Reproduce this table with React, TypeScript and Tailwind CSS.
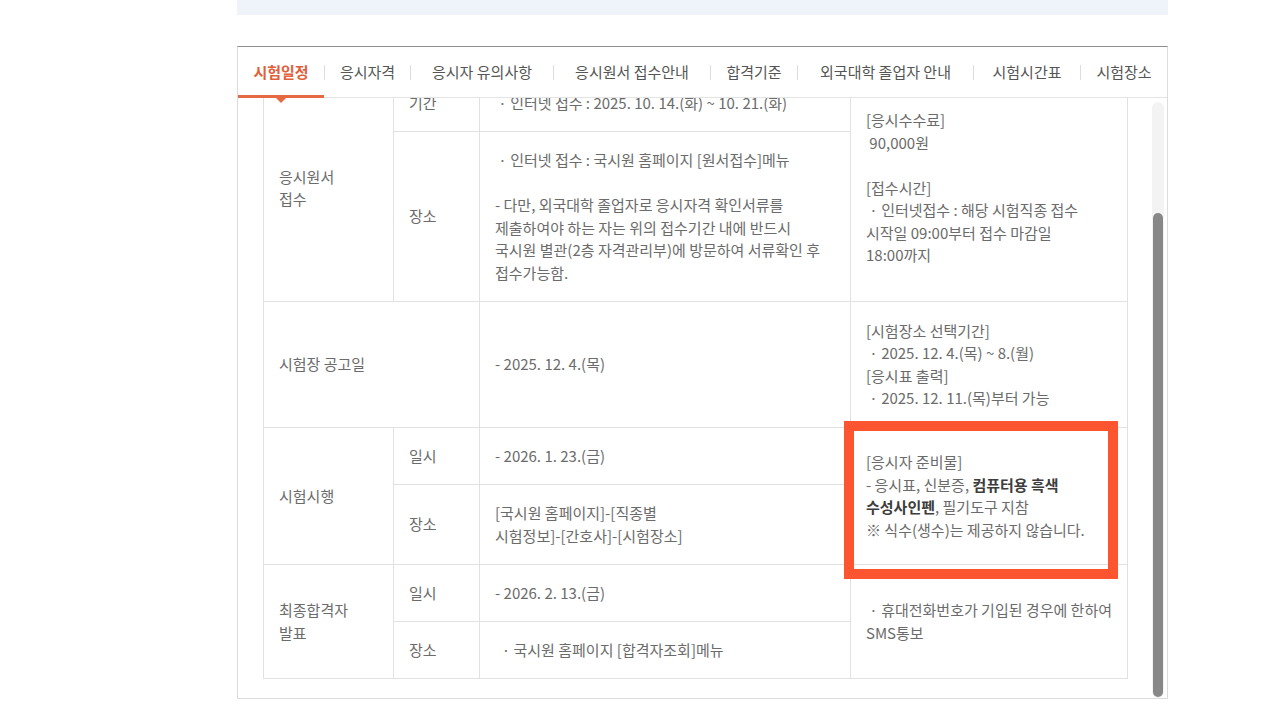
import React from 'react';

const TABS = [
  { label: '시험일정', w: 'w-[86px]' },
  { label: '응시자격', w: 'w-[85px]' },
  { label: '응시자 유의사항', w: 'w-[142px]' },
  { label: '응시원서 접수안내', w: 'w-[156px]' },
  { label: '합격기준', w: 'w-[86px]' },
  { label: '외국대학 졸업자 안내', w: 'w-[175px]' },
  { label: '시험시간표', w: 'w-[106px]' },
  { label: '시험장소', w: 'w-[86px]' },
];

const cell = 'border border-[#e1e1e1] px-[15px] py-[16px] align-middle text-left whitespace-nowrap';

const App: React.FC = () => {
  return (
    <div className="min-h-screen bg-white text-[15px] leading-[22.5px] text-[#6b6b6b]" style={{ fontFamily: '"Noto Sans CJK KR", "Noto Sans", sans-serif' }}>
      <div className="ml-[237px] w-[931px]">
        <div className="h-[15px] bg-[#eef4fa]" />

        <div className="mt-[31px] border border-[#dcdcdc] border-t-[#8e8e8e]">
          {/* tab bar */}
          <div className="flex h-[51px] items-center border-b border-[#e4e4e4]">
            {TABS.map((tab, i) => (
              <React.Fragment key={tab.label}>
                {i > 0 && <span className="h-[15px] w-px shrink-0 bg-[#dddddd]" />}
                <div
                  className={`relative flex h-full shrink-0 items-center justify-center whitespace-nowrap ${tab.w} ${
                    i === 0 ? 'font-bold text-[#e0603b]' : 'text-[#555555]'
                  }`}
                >
                  {tab.label}
                  {i === 0 && (
                    <>
                      <span className="absolute inset-x-0 -bottom-px h-[3px] bg-[#e56a43]" />
                      <span className="absolute -bottom-[6px] left-1/2 h-0 w-0 -translate-x-1/2 border-x-[5px] border-t-[5px] border-x-transparent border-t-[#e56a43]" />
                    </>
                  )}
                </div>
              </React.Fragment>
            ))}
          </div>

          {/* scroll area */}
          <div className="flex h-[600px] overflow-hidden">
            <div className="flex-1 pl-[25px] pr-[24px] pb-[20px]">
              <table className="-mt-[24px] w-full table-fixed border-collapse">
                <colgroup>
                  <col className="w-[130px]" />
                  <col className="w-[86px]" />
                  <col className="w-[371px]" />
                  <col />
                </colgroup>
                <tbody>
                  <tr className="h-[57px]">
                    <td rowSpan={2} className={cell}>
                      응시원서
                      <br />
                      접수
                    </td>
                    <td className={cell}>기간</td>
                    <td className={cell}>&nbsp;· 인터넷 접수 : 2025. 10. 14.(화) ~ 10. 21.(화)</td>
                    <td rowSpan={2} className={cell}>
                      [응시수수료]
                      <br />
                      &nbsp;90,000원
                      <br />
                      <br />
                      [접수시간]
                      <br />
                      &nbsp;· 인터넷접수 : 해당 시험직종 접수
                      <br />
                      시작일 09:00부터 접수 마감일
                      <br />
                      18:00까지
                    </td>
                  </tr>
                  <tr className="h-[170px]">
                    <td className={cell}>장소</td>
                    <td className={cell}>
                      &nbsp;· 인터넷 접수 : 국시원 홈페이지 [원서접수]메뉴
                      <br />
                      <br />
                      - 다만, 외국대학 졸업자로 응시자격 확인서류를
                      <br />
                      제출하여야 하는 자는 위의 접수기간 내에 반드시
                      <br />
                      국시원 별관(2층 자격관리부)에 방문하여 서류확인 후
                      <br />
                      접수가능함.
                    </td>
                  </tr>
                  <tr className="h-[126px]">
                    <td colSpan={2} className={cell}>시험장 공고일</td>
                    <td className={cell}>- 2025. 12. 4.(목)</td>
                    <td className={cell}>
                      [시험장소 선택기간]
                      <br />
                      &nbsp;· 2025. 12. 4.(목) ~ 8.(월)
                      <br />
                      [응시표 출력]
                      <br />
                      &nbsp;· 2025. 12. 11.(목)부터 가능
                    </td>
                  </tr>
                  <tr className="h-[57px]">
                    <td rowSpan={2} className={cell}>시험시행</td>
                    <td className={cell}>일시</td>
                    <td className={cell}>- 2026. 1. 23.(금)</td>
                    <td rowSpan={2} className={`${cell} relative`}>
                      [응시자 준비물]
                      <br />
                      - 응시표, 신분증, <b className="font-bold text-[#3d3d3d]">컴퓨터용 흑색</b>
                      <br />
                      <b className="font-bold text-[#3d3d3d]">수성사인펜</b>, 필기도구 지참
                      <br />※ 식수(생수)는 제공하지 않습니다.
                      <div className="pointer-events-none absolute -left-[7px] -top-[7px] h-[158px] w-[274px] border-[10px] border-[#fc5530]" />
                    </td>
                  </tr>
                  <tr className="h-[80px]">
                    <td className={cell}>장소</td>
                    <td className={cell}>
                      [국시원 홈페이지]-[직종별
                      <br />
                      시험정보]-[간호사]-[시험장소]
                    </td>
                  </tr>
                  <tr className="h-[57px]">
                    <td rowSpan={2} className={cell}>
                      최종합격자
                      <br />
                      발표
                    </td>
                    <td className={cell}>일시</td>
                    <td className={cell}>- 2026. 2. 13.(금)</td>
                    <td rowSpan={2} className={cell}>
                      &nbsp;· 휴대전화번호가 기입된 경우에 한하여
                      <br />
                      SMS통보
                    </td>
                  </tr>
                  <tr className="h-[57px]">
                    <td className={cell}>장소</td>
                    <td className={cell}>&nbsp;&nbsp;· 국시원 홈페이지 [합격자조회]메뉴</td>
                  </tr>
                </tbody>
              </table>
            </div>

            {/* scrollbar */}
            <div className="mr-[3px] mt-[4px] w-[12px] rounded-full bg-[#f3f3f3]">
              <div className="ml-px mt-[111px] h-[484px] w-[10px] rounded-full bg-[#888888]" />
            </div>
          </div>
        </div>
      </div>
    </div>
  );
};

export default App;
